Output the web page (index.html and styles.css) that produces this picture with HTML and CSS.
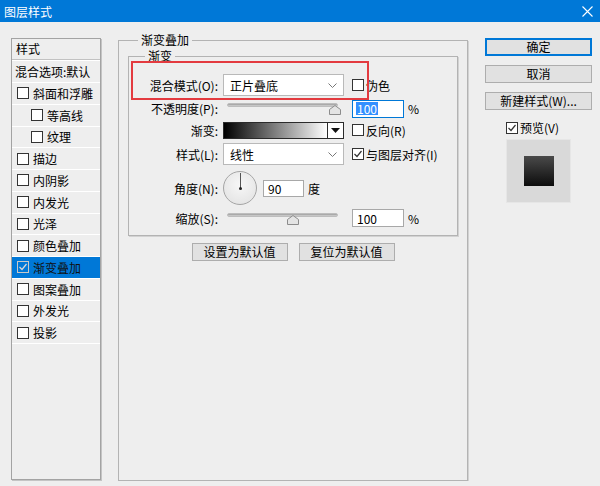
FILE: index.html
```html
<!DOCTYPE html>
<html lang="zh-CN">
<head>
    <meta charset="UTF-8">
    <title>图层样式</title>
    <link rel="stylesheet" href="styles.css">
</head>
<body>
    <div class="titlebar">
        <span class="title">图层样式</span>
        <svg class="close" width="11" height="11" viewBox="0 0 11 11">
            <path d="M0.5 0.5 L10.5 10.5 M10.5 0.5 L0.5 10.5" stroke="#fff" stroke-width="1.1" fill="none"/>
        </svg>
    </div>

    <div class="dialog">
        <div class="style-list">
            <div class="list-head">样式</div>
            <div class="list-row blend">混合选项:默认</div>
            <div class="list-row"><span class="check"></span>斜面和浮雕</div>
            <div class="list-row sub"><span class="check"></span>等高线</div>
            <div class="list-row sub"><span class="check"></span>纹理</div>
            <div class="list-row"><span class="check"></span>描边</div>
            <div class="list-row"><span class="check"></span>内阴影</div>
            <div class="list-row"><span class="check"></span>内发光</div>
            <div class="list-row"><span class="check"></span>光泽</div>
            <div class="list-row"><span class="check"></span>颜色叠加</div>
            <div class="list-row selected">
                <span class="check">
                    <svg width="10" height="10" viewBox="0 0 10 10"><path d="M1.5 5 L4 7.5 L8.5 2" stroke="#d8d8d8" stroke-width="1.2" fill="none"/></svg>
                </span>渐变叠加
            </div>
            <div class="list-row"><span class="check"></span>图案叠加</div>
            <div class="list-row"><span class="check"></span>外发光</div>
            <div class="list-row"><span class="check"></span>投影</div>
        </div>

        <fieldset class="group main-group">
            <legend>渐变叠加</legend>
            <fieldset class="group inner-group">
                <legend>渐变</legend>
                <div class="form">
                    <div class="highlight"></div>

                    <label class="label">混合模式(O):</label>
                    <div class="select">
                        <span>正片叠底</span>
                        <svg width="9" height="5" viewBox="0 0 9 5"><path d="M0.5 0.5 L4.5 4.5 L8.5 0.5" stroke="#777" fill="none"/></svg>
                    </div>
                    <div class="extra"><span class="check"></span>伪色</div>

                    <label class="label">不透明度(P):</label>
                    <div class="slider">
                        <div class="track"></div>
                        <svg class="thumb" style="left: 102px" width="12" height="10" viewBox="0 0 12 10"><path d="M0.5 9.5 L0.5 4.5 L6 0.5 L11.5 4.5 L11.5 9.5 Z" fill="#e4e4e4" stroke="#8c8c8c"/></svg>
                    </div>
                    <div class="extra">
                        <span class="field focused"><span class="sel-text">100</span></span>
                        <span class="unit">%</span>
                    </div>

                    <label class="label">渐变:</label>
                    <div class="gradient">
                        <div class="ramp"></div>
                        <div class="ramp-arrow">
                            <svg width="9" height="5" viewBox="0 0 9 5"><path d="M0 0 L9 0 L4.5 5 Z" fill="#111"/></svg>
                        </div>
                    </div>
                    <div class="extra"><span class="check"></span>反向(R)</div>

                    <label class="label">样式(L):</label>
                    <div class="select">
                        <span>线性</span>
                        <svg width="9" height="5" viewBox="0 0 9 5"><path d="M0.5 0.5 L4.5 4.5 L8.5 0.5" stroke="#777" fill="none"/></svg>
                    </div>
                    <div class="extra">
                        <span class="check">
                            <svg width="10" height="10" viewBox="0 0 10 10"><path d="M1.5 5 L4 7.5 L8.5 2" stroke="#333" stroke-width="1.2" fill="none"/></svg>
                        </span>与图层对齐(I)
                    </div>

                    <label class="label">角度(N):</label>
                    <div class="angle">
                        <div class="dial"><span class="needle"></span><span class="pivot"></span></div>
                        <span class="field small">90</span>
                        <span class="unit">度</span>
                    </div>

                    <label class="label">缩放(S):</label>
                    <div class="slider">
                        <div class="track"></div>
                        <svg class="thumb" style="left: 60px" width="12" height="10" viewBox="0 0 12 10"><path d="M0.5 9.5 L0.5 4.5 L6 0.5 L11.5 4.5 L11.5 9.5 Z" fill="#e4e4e4" stroke="#8c8c8c"/></svg>
                    </div>
                    <div class="extra">
                        <span class="field">100</span>
                        <span class="unit">%</span>
                    </div>
                </div>
            </fieldset>

            <div class="default-buttons">
                <button class="btn wide">设置为默认值</button>
                <button class="btn wide">复位为默认值</button>
            </div>
        </fieldset>

        <div class="actions">
            <button class="btn action primary">确定</button>
            <button class="btn action">取消</button>
            <button class="btn action">新建样式(W)...</button>
            <div class="preview-check">
                <span class="check">
                    <svg width="10" height="10" viewBox="0 0 10 10"><path d="M1.5 5 L4 7.5 L8.5 2" stroke="#333" stroke-width="1.2" fill="none"/></svg>
                </span>预览(V)
            </div>
            <div class="preview"><div class="swatch"></div></div>
        </div>
    </div>
</body>
</html>
```

FILE: styles.css
```css
body {
    margin: 0;
    background: #eeeeee;
    font-family: "Noto Sans CJK SC", "Liberation Sans", sans-serif;
    font-size: 12px;
    color: #000;
}

.titlebar {
    height: 22px;
    background: #0078d7;
    display: flex;
    align-items: center;
    justify-content: space-between;
    padding: 0 7px 0 4px;
    color: #fff;
}

.title {
    font-size: 12px;
}

.dialog {
    display: flex;
    align-items: flex-start;
    padding: 10px 0 0 11px;
}

/* left list of effects */
.style-list {
    width: 88px;
    height: 440px;
    margin-top: 6px;
    border: 1px solid #a3a3a3;
    box-shadow: 1px 1px 0 #c4c4c4;
}

.list-head {
    height: 20px;
    line-height: 20px;
    padding-left: 4px;
    border-bottom: 1px solid #c2c2c2;
    box-shadow: 0 1px 0 #fff;
}

.list-row {
    height: 20.75px;
    border-bottom: 1px solid #fff;
    display: flex;
    align-items: center;
    padding-left: 5px;
    white-space: nowrap;
    overflow: hidden;
}

.list-row.blend {
    height: 21px;
    margin-top: 1px;
    padding-left: 3px;
}

.list-row.sub {
    padding-left: 19px;
}

.list-row.selected {
    background: #0078d7;
    color: #111;
}

.list-row.selected .check {
    background: transparent;
    border-color: #c8c8c8;
}

.check {
    display: inline-flex;
    align-items: center;
    justify-content: center;
    box-sizing: border-box;
    width: 12px;
    height: 12px;
    border: 1px solid #333;
    background: #fff;
    margin-right: 4px;
    flex-shrink: 0;
}

/* group boxes */
.group {
    margin: 0;
    border: 1px solid #b3b3b3;
    box-shadow: 1px 1px 0 #d2d2d2;
    min-width: 0;
}

.group legend {
    line-height: 16px;
    padding: 0 3px;
}

.main-group {
    box-sizing: border-box;
    width: 350px;
    height: 449px;
    margin-left: 17px;
    padding: 0 9px;
}

.main-group > legend {
    margin-left: 10px;
}

.inner-group {
    padding: 8px 0 8px 0;
    position: relative;
}

.inner-group > legend {
    margin-left: 16px;
}

.form {
    position: relative;
    display: grid;
    grid-template-columns: 89px 121px auto;
    grid-template-rows: 26px 21px 22px 26px 42px 18px;
    column-gap: 5px;
    align-items: center;
}

.highlight {
    position: absolute;
    left: 2px;
    top: -11px;
    width: 238px;
    height: 39px;
    box-sizing: border-box;
    border: 2px solid #e33a3f;
    pointer-events: none;
}

.label {
    text-align: right;
    white-space: nowrap;
}

.extra {
    display: flex;
    align-items: center;
    margin-left: 3px;
    white-space: nowrap;
}

.extra .check {
    margin-right: 2px;
}

.select {
    height: 22px;
    box-sizing: border-box;
    border: 1px solid #b9b9b9;
    background: #fff;
    display: flex;
    align-items: center;
    justify-content: space-between;
    padding: 0 6px 0 6px;
}

.slider {
    position: relative;
    width: 111px;
    height: 13px;
    margin-left: 4px;
}

.track {
    height: 4px;
    margin-top: 1px;
    border-radius: 2px;
    background: linear-gradient(#9c9c9c, #d4d4d4);
    border: 1px solid #bdbdbd;
    box-sizing: border-box;
}

.thumb {
    position: absolute;
    top: 3px;
}

.field {
    display: inline-flex;
    align-items: center;
    box-sizing: border-box;
    width: 52px;
    height: 18px;
    padding-left: 4px;
    border: 1px solid #a8a8a8;
    background: #fff;
}

.field.focused {
    border-color: #0078d7;
    padding-left: 3px;
}

.field.small {
    width: 41px;
    height: 17px;
    margin-left: 6px;
}

.sel-text {
    background: #3390ff;
    color: #fff;
    line-height: 13px;
    padding: 0 1px;
}

.unit {
    margin-left: 4px;
}

.gradient {
    display: flex;
    height: 17px;
    box-sizing: border-box;
    border: 1px solid #2b2b2b;
    width: 121px;
}

.ramp {
    flex: 1;
    background: linear-gradient(to right, #000, #fff);
}

.ramp-arrow {
    width: 15px;
    border-left: 1px solid #2b2b2b;
    background: #fff;
    display: flex;
    align-items: center;
    justify-content: center;
}

.angle {
    grid-column: 2 / span 2;
    display: flex;
    align-items: center;
}

.dial {
    position: relative;
    width: 34px;
    height: 34px;
    box-sizing: border-box;
    border-radius: 50%;
    border: 1px solid #a5a5a5;
    background: radial-gradient(circle at 50% 40%, #f7f7f7, #e0e0e0);
}

.needle {
    position: absolute;
    left: 16px;
    top: 1px;
    width: 1px;
    height: 16px;
    background: #555;
}

.pivot {
    position: absolute;
    left: 15px;
    top: 15px;
    width: 3px;
    height: 3px;
    border-radius: 50%;
    background: #222;
}

/* buttons */
.btn {
    font: inherit;
    color: #000;
    background: #e1e1e1;
    border: 1px solid #adadad;
    height: 18px;
    padding: 0;
    line-height: 14px;
}

.default-buttons {
    display: flex;
    justify-content: center;
    gap: 11px;
    margin-top: 7px;
}

.btn.wide {
    width: 96px;
}

.actions {
    display: flex;
    flex-direction: column;
    width: 107px;
    margin: 6px 0 0 17px;
}

.btn.action {
    width: 107px;
    margin-bottom: 9px;
}

.btn.primary {
    border-color: #0078d7;
    box-shadow: inset 0 0 0 1px #0078d7;
}

.preview-check {
    display: flex;
    align-items: center;
    margin: 0 0 0 21px;
}

.preview-check .check {
    margin-right: 2px;
}

.preview {
    width: 65px;
    height: 64px;
    margin: 3px 0 0 21px;
    box-sizing: border-box;
    background: #d9d9d9;
    border: 1px solid #e6e6e6;
    display: flex;
    align-items: center;
    justify-content: center;
}

.swatch {
    width: 30px;
    height: 30px;
    background: linear-gradient(#4a4a4a, #0c0c0c);
}
```
